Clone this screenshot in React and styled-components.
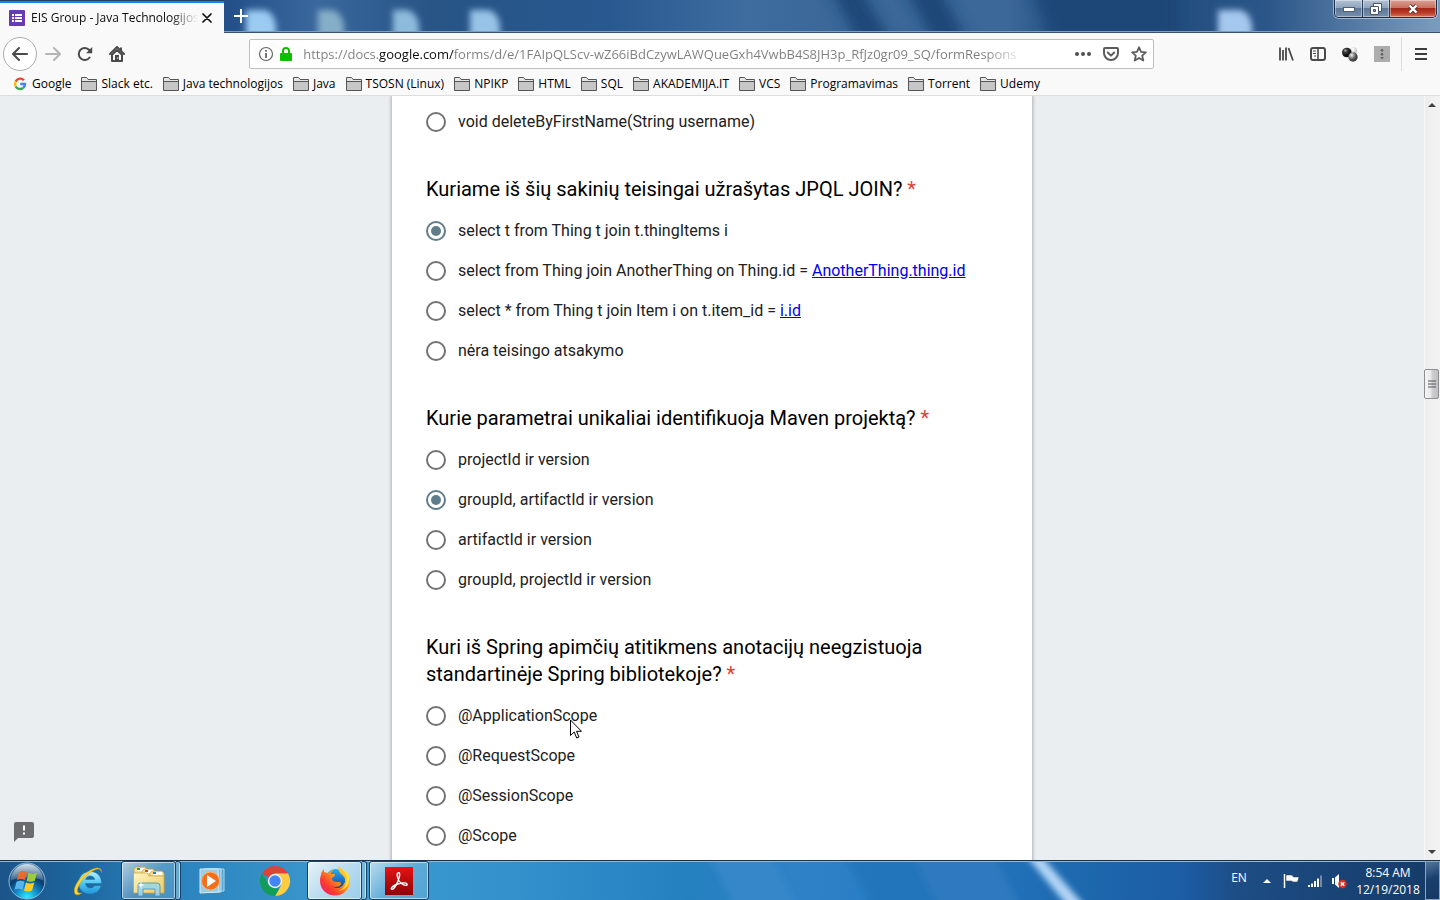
import React from "react";
import styled, { createGlobalStyle, css } from "styled-components";

const UI_FONT = '"Open Sans", "Noto Sans", sans-serif';
const FORM_FONT = 'Roboto, "Noto Sans", sans-serif';

const GlobalStyle = createGlobalStyle`
  *, *::before, *::after { box-sizing: border-box; }
  body { margin: 0; overflow: hidden; font-family: ${UI_FONT}; }
  button { padding: 0; border: 0; background: none; font: inherit; color: inherit; }
  svg { display: block; flex: none; }
`;

const Desktop = styled.div`
  position: relative;
  display: flex;
  flex-direction: column;
  height: 100vh;
  overflow: hidden;
`;

/* ---------- title bar ---------- */

const TitleBar = styled.header`
  position: relative;
  display: flex;
  align-items: flex-start;
  height: 33px;
  flex: none;
  background: #245289;
  overflow: hidden;
`;

const Backdrop = styled.svg`
  position: absolute;
  inset: 0;
  width: 100%;
  height: 100%;
`;

const Tab = styled.div`
  position: relative;
  display: flex;
  align-items: center;
  width: 224px;
  height: 33px;
  padding: 2px 8px 0 9px;
  background: #f9f9fa;
  border-top: 1px solid #24405f;
  box-shadow: inset 0 2px 0 #0a84ff;
`;

const TabTitle = styled.span`
  flex: 1;
  margin-left: 6px;
  overflow: hidden;
  white-space: nowrap;
  font-size: 12px;
  line-height: 18px;
  color: #0c0c0d;
  mask-image: linear-gradient(to right, #000 84%, transparent 100%);
`;

const TabButton = styled.button`
  position: relative;
  display: grid;
  place-items: center;
  width: 18px;
  height: 18px;
`;

const NewTab = styled(TabButton)`
  width: 34px;
  height: 32px;
`;

const WindowControls = styled.div`
  position: relative;
  display: flex;
  height: 18px;
  margin: 0 3px 0 auto;
  border: 1px solid #1d2d44;
  border-top: 0;
  border-radius: 0 0 5px 5px;
  box-shadow: 0 0 0 1px rgba(255, 255, 255, 0.45);
  overflow: hidden;
`;

const WindowButton = styled.button`
  display: grid;
  place-items: center;
  width: ${(p) => (p.$close ? 47 : 27)}px;
  height: 17px;
  box-shadow: inset 0 0 0 1px rgba(255, 255, 255, 0.4);
  background: ${(p) =>
    p.$close
      ? "linear-gradient(#d9a297 0, #c9705f 46%, #a5281a 50%, #b93a26 75%, #d8745a 100%)"
      : "linear-gradient(#b3c1d3 0, #8fa4bd 46%, #5d7898 50%, #7690ae 100%)"};
  & + & { border-left: 1px solid #2a3c55; }
`;

/* ---------- navigation ---------- */

const NavBar = styled.nav`
  display: flex;
  align-items: center;
  height: 41px;
  flex: none;
  padding: 0 3px;
  background: #f9f9fa;
`;

const ToolButton = styled.button`
  display: grid;
  place-items: center;
  width: 32px;
  height: 32px;
`;

const BackButton = styled(ToolButton)`
  width: 34px;
  height: 34px;
  border: 1px solid #adadae;
  border-radius: 50%;
  background: #fff;
`;

const NavSpace = styled.div`
  flex: 117;
`;

const AddressBar = styled.div`
  display: flex;
  align-items: center;
  flex: 901;
  min-width: 0;
  height: 30px;
  padding-left: 8px;
  background: #fff;
  border: 1px solid #bfbfc0;
  border-radius: 2px;
`;

const AddressIcons = styled.div`
  display: flex;
  gap: 4px;
  margin-right: 9px;
`;

const AddressInput = styled.input`
  flex: 1;
  min-width: 0;
  height: 26px;
  margin-right: 32px;
  padding: 0;
  border: 0;
  outline: 0;
  font: 13px ${UI_FONT};
  color: #737373;
  background: linear-gradient(
    to right,
    #7d7d7d 76px, #0c0c0d 76px, #0c0c0d 151px, #7d7d7d 151px,
    #7d7d7d calc(100% - 52px), transparent calc(100% - 12px)
  );
  background-clip: text;
  -webkit-text-fill-color: transparent;
`;

const PageAction = styled.button`
  display: grid;
  place-items: center;
  width: 28px;
  height: 28px;
`;

const Divider = styled.span`
  width: 1px;
  height: 34px;
  margin: 0 3px;
  background: #dcdcdd;
`;

const BookmarkBar = styled.div`
  display: flex;
  align-items: center;
  gap: 10px;
  height: 22px;
  flex: none;
  padding: 0 12px 2px;
  background: #f9f9fa;
  border-bottom: 1px solid #dededf;
`;

const Bookmark = styled.button`
  display: flex;
  align-items: center;
  gap: 4px;
  white-space: nowrap;
  font-size: 12px;
  line-height: 18px;
  color: #000;
`;

/* ---------- page ---------- */

const Viewport = styled.div`
  position: relative;
  display: flex;
  flex: 1;
  min-height: 0;
  background: #eaeef1;
`;

const PageArea = styled.main`
  flex: 1;
  overflow: hidden;
`;

const FormCard = styled.form`
  width: 640px;
  min-height: 100%;
  margin: 0 auto;
  padding: 6px 34px;
  background: #fff;
  box-shadow: 0 0 3px 1px rgba(0, 0, 0, 0.25);
  font-family: ${FORM_FONT};
`;

const Question = styled.fieldset`
  margin: 0 0 34px;
  padding: 0;
  border: 0;
  min-width: 0;
`;

const QuestionTitle = styled.legend`
  padding: 0 0 8px;
  font-size: 20px;
  line-height: 27px;
  color: #000;
`;

const Required = styled.span`
  color: #db4437;
`;

const Option = styled.label`
  display: flex;
  align-items: center;
  gap: 12px;
  height: 40px;
  font-size: 16px;
  line-height: 24px;
  color: #212121;
`;

const Radio = styled.input`
  appearance: none;
  display: grid;
  place-items: center;
  flex: none;
  width: 20px;
  height: 20px;
  margin: 0;
  border: 2px solid #737373;
  border-radius: 50%;
  &:checked { border-color: #607d8b; }
  &:checked::before {
    content: "";
    width: 10px;
    height: 10px;
    border-radius: 50%;
    background: #607d8b;
  }
`;

const OptionLink = styled.a`
  color: #0000ee;
  text-decoration: underline;
`;

const ReportButton = styled.button`
  position: absolute;
  left: 14px;
  bottom: 18px;
`;

const ScrollBar = styled.div`
  display: flex;
  flex-direction: column;
  width: 16px;
  background: linear-gradient(to right, #fafafa, #ebebec 2px, #f0f0f0 6px, #f2f2f2);
`;

const ScrollArrow = styled.button`
  display: grid;
  place-items: center;
  height: 17px;
`;

const ScrollTrack = styled.div`
  display: flex;
  flex-direction: column;
  flex: 1;
`;

const TrackPart = styled.div`
  flex: ${(p) => p.$part};
`;

const ScrollThumb = styled.div`
  display: grid;
  place-items: center;
  height: 30px;
  margin-right: 1px;
  border: 1px solid #8f8f8f;
  border-radius: 2px;
  background: linear-gradient(to right, #f5f5f5, #e9e9eb 45%, #cfcfd2 55%, #c0c0c4);
`;

const Pointer = styled.svg`
  position: absolute;
  left: 570px;
  top: 719px;
`;

/* ---------- taskbar ---------- */

const TaskBar = styled.footer`
  position: relative;
  display: flex;
  flex: none;
  height: 40px;
  border-top: 1px solid #1b3148;
  background: #2577bd;
  overflow: hidden;
`;

const StartButton = styled.button`
  position: relative;
  display: grid;
  place-items: center;
  width: 54px;
  height: 39px;
`;

const TaskList = styled.div`
  position: relative;
  display: flex;
  gap: 2px;
  margin-left: 5px;
`;

const running = css`
  border: 1px solid #14426b;
  border-radius: 3px;
  box-shadow: inset 0 0 0 1px rgba(255, 255, 255, 0.55);
  background: ${(p) =>
    p.$state === "active"
      ? "linear-gradient(135deg, #e8f3fa, #b9dcf0 50%, #9dcdea)"
      : "linear-gradient(135deg, rgba(255,255,255,.65), rgba(255,255,255,.2) 50%, rgba(255,255,255,.12))"};
`;

const TaskButton = styled.button`
  display: grid;
  place-items: center;
  width: ${(p) => (p.$stacked ? 55 : 60)}px;
  height: 39px;
  ${(p) => p.$state && running}
`;

const TaskGroup = styled.div`
  display: flex;
  width: 60px;
`;

const StackEdge = styled.span`
  width: 5px;
  height: 39px;
  border: 1px solid #14426b;
  border-left: 0;
  border-radius: 0 3px 3px 0;
  box-shadow: inset -1px 0 0 rgba(255, 255, 255, 0.6);
  background: rgba(255, 255, 255, 0.3);
`;

const Tray = styled.div`
  position: relative;
  display: flex;
  align-items: center;
  margin-left: auto;
  color: #fff;
  font-size: 12px;
`;

const Language = styled.button`
  width: 28px;
  margin: 0 2px 6px 0;
  font-size: 12px;
  line-height: 16px;
`;

const TrayButton = styled.button`
  display: grid;
  place-items: center;
  width: 24px;
  height: 38px;
`;

const Clock = styled.button`
  display: flex;
  flex-direction: column;
  align-items: center;
  width: 74px;
  font-size: 12px;
  line-height: 17px;
  white-space: nowrap;
`;

const ShowDesktop = styled.button`
  width: 15px;
  height: 39px;
  border: 1px solid #8ba5c0;
  background: linear-gradient(160deg, #54779d, #1a3f6d 45%, #163963);
`;

/* ---------- icons ---------- */

const FormsIcon = () => (
  <svg width="16" height="16" viewBox="0 0 16 16">
    <rect width="16" height="16" rx="1" fill="#673ab7" />
    <path d="M3 4h2v2H3zM6 4h7v2H6zM3 7h2v2H3zM6 7h7v2H6zM3 10h2v2H3zM6 10h7v2H6z" fill="#fff" />
  </svg>
);

const CloseIcon = () => (
  <svg width="10" height="10" viewBox="0 0 10 10">
    <path d="M1 1l8 8M9 1l-8 8" stroke="#0c0c0d" strokeWidth="1.700" strokeLinecap="round" />
  </svg>
);

const PlusIcon = () => (
  <svg width="14" height="14" viewBox="0 0 14 14">
    <path d="M7 0v14M0 7h14" stroke="#fff" strokeWidth="2" />
  </svg>
);

const ArrowIcon = ({ flip, color = "#4a4a4b" }) => (
  <svg width="16" height="16" viewBox="0 0 16 16">
    <path
      d={flip ? "M1 8h13M9 2l6 6-6 6" : "M15 8H2M7 2L1 8l6 6"}
      fill="none" stroke={color} strokeWidth="2" strokeLinecap="round" strokeLinejoin="round"
    />
  </svg>
);

const ReloadIcon = () => (
  <svg width="16" height="16" viewBox="0 0 16 16">
    <path d="M12.600 11.500A6 6 0 1 1 12.300 4" fill="none" stroke="#4a4a4b" strokeWidth="2" strokeLinecap="round" />
    <path d="M15.200 1v6.200H9z" fill="#4a4a4b" />
  </svg>
);

const HomeIcon = () => (
  <svg width="16" height="16" viewBox="0 0 16 16">
    <path d="M1 8l7-7 7 7" fill="none" stroke="#4a4a4b" strokeWidth="2" strokeLinecap="round" strokeLinejoin="round" />
    <path d="M3 8.800L8 4l5 4.800V15H3z" fill="none" stroke="#4a4a4b" strokeWidth="2" strokeLinejoin="round" />
    <path d="M6 9h4v6H6zM11 1.500h2V5h-2z" fill="#4a4a4b" />
    <circle cx="8.800" cy="12" r=".7" fill="#f9f9fa" />
  </svg>
);

const InfoIcon = () => (
  <svg width="16" height="16" viewBox="0 0 16 16">
    <circle cx="8" cy="8" r="6.500" fill="none" stroke="#666" strokeWidth="1.200" />
    <path d="M7.200 4h1.600v1.700H7.200zM7.200 7h1.600v5H7.200z" fill="#555" />
  </svg>
);

const LockIcon = () => (
  <svg width="16" height="16" viewBox="0 0 16 16">
    <path d="M5 7V5a3 3 0 0 1 6 0v2" fill="none" stroke="#12bc00" strokeWidth="2" />
    <rect x="2" y="7" width="12" height="8" rx="1" fill="#12bc00" />
  </svg>
);

const DotsIcon = () => (
  <svg width="16" height="16" viewBox="0 0 16 16" fill="#4f4f50">
    <circle cx="2" cy="8" r="2" /><circle cx="8" cy="8" r="2" /><circle cx="14" cy="8" r="2" />
  </svg>
);

const PocketIcon = () => (
  <svg width="16" height="16" viewBox="0 0 16 16" fill="none" stroke="#5c5c5d" strokeWidth="2" strokeLinecap="round" strokeLinejoin="round">
    <path d="M2 2h12a1 1 0 0 1 1 1v4a7 7 0 0 1-14 0V3a1 1 0 0 1 1-1z" />
    <path d="M4.800 6.500L8 9.600l3.200-3.100" />
  </svg>
);

const StarIcon = () => (
  <svg width="16" height="16" viewBox="0 0 16 16">
    <path d="M8 1.300l2 4.500 4.900.5-3.700 3.300 1.100 4.900L8 12l-4.300 2.500 1.100-4.900L1.100 6.300 6 5.800z" fill="none" stroke="#5c5c5d" strokeWidth="1.800" strokeLinejoin="round" />
  </svg>
);

const LibraryIcon = () => (
  <svg width="16" height="16" viewBox="0 0 16 16">
    <path d="M2 1.500v13M5 4v10.500M8 1.500v13M10.500 2l4.500 12.500" fill="none" stroke="#4a4a4b" strokeWidth="1.800" />
  </svg>
);

const SidebarIcon = () => (
  <svg width="16" height="16" viewBox="0 0 16 16" fill="none" stroke="#4a4a4b">
    <rect x="1" y="2" width="14" height="12" rx="2" strokeWidth="2" />
    <path d="M8 2v12" strokeWidth="1.600" />
    <path d="M3 5h3M3 7.500h3M4 10h2" />
  </svg>
);

const SpheresIcon = () => (
  <svg width="16" height="16" viewBox="0 0 16 16">
    <defs>
      <radialGradient id="dark" cx=".35" cy=".3"><stop stopColor="#bbb" /><stop offset=".35" stopColor="#444" /><stop offset="1" stopColor="#111" /></radialGradient>
      <radialGradient id="mid" cx=".35" cy=".3"><stop stopColor="#eee" /><stop offset="1" stopColor="#444" /></radialGradient>
      <radialGradient id="pale" cx=".4" cy=".3"><stop stopColor="#fff" /><stop offset="1" stopColor="#ccc" /></radialGradient>
    </defs>
    <circle cx="11.500" cy="5" r="3.800" fill="url(#pale)" />
    <circle cx="4.800" cy="6.500" r="4.800" fill="url(#dark)" />
    <circle cx="11" cy="11" r="4.700" fill="url(#mid)" />
  </svg>
);

const DownloaderIcon = () => (
  <svg width="16" height="16" viewBox="0 0 16 16">
    <rect width="16" height="16" fill="#adadad" />
    <path d="M7 3h2v1h1L8 6 6 4h1zM7 7h2v1h1l-2 2-2-2h1zM6 11h4l-2 2.500z" fill="#666" />
  </svg>
);

const MenuIcon = () => (
  <svg width="12" height="12" viewBox="0 0 12 12">
    <path d="M0 1h12M0 6h12M0 11h12" stroke="#3c3c3d" strokeWidth="2" />
  </svg>
);

const GoogleIcon = () => (
  <svg width="16" height="16" viewBox="0 0 16 16" fill="none" strokeWidth="2.400">
    <path d="M11.900 4.200A5 5 0 0 0 3.700 5.500" stroke="#ea4335" />
    <path d="M3.700 5.500a5 5 0 0 0 0 5" stroke="#fbbc05" />
    <path d="M3.700 10.500A5 5 0 0 0 11 12" stroke="#34a853" />
    <path d="M11 12a4.600 4.600 0 0 0 2-4H8.200" stroke="#4285f4" />
  </svg>
);

const FolderIcon = () => (
  <svg width="16" height="16" viewBox="0 0 16 16">
    <path d="M.5 14.500v-13h5l1.500 2h8.500v11z" fill="#c6c6c6" stroke="#555" strokeLinejoin="round" />
    <path d="M1 2h4.300l1.500 2H15v1H1z" fill="#e6e6e6" />
    <path d="M1 5.500h14" stroke="#555" />
  </svg>
);

const ReportIcon = () => (
  <svg width="20" height="20" viewBox="0 0 20 20">
    <path d="M2 0h16a2 2 0 0 1 2 2v12a2 2 0 0 1-2 2H4l-4 4V2a2 2 0 0 1 2-2z" fill="#6b6c6d" />
    <path d="M9 3.500h2v5H9zM9 10.500h2v2H9z" fill="#fff" />
  </svg>
);

const StartIcon = () => (
  <svg width="38" height="38" viewBox="0 0 38 38">
    <defs>
      <radialGradient id="orb" cx=".5" cy=".95" r=".9"><stop stopColor="#35e8ff" /><stop offset=".35" stopColor="#108ac8" /><stop offset=".65" stopColor="#0b3b6d" /><stop offset="1" stopColor="#5d86a8" /></radialGradient>
      <linearGradient id="orbShine" x2="0" y2="1"><stop stopColor="#e4eef5" stopOpacity=".85" /><stop offset="1" stopColor="#9ab5ca" stopOpacity=".3" /></linearGradient>
    </defs>
    <circle cx="19" cy="19" r="18" fill="url(#orb)" stroke="#8cb7d4" />
    <path d="M3 18a16 16 0 0 1 32 0q-16-5-32 0z" fill="url(#orbShine)" />
    <path d="M11 10q4-2 8 0l-2 8q-4-2-8 0z" fill="#ee6a2c" />
    <path d="M20.500 10.800q4 2 8.500 0l-2.200 8q-4 2-8.200 0z" fill="#9ccb3b" />
    <path d="M8.500 19.800q4-2 8 0l-2 8q-4-2-8 0z" fill="#56b5ec" />
    <path d="M18 20.500q4 2 8.300 0l-2.200 8q-4 2-8.100 0z" fill="#fdc92f" />
  </svg>
);

const ExplorerEIcon = () => (
  <svg width="32" height="32" viewBox="0 0 32 32">
    <defs><linearGradient id="ie" x2="0" y2="1"><stop stopColor="#b9f1ff" /><stop offset=".55" stopColor="#49c6f3" /><stop offset="1" stopColor="#2394d6" /></linearGradient></defs>
    <path d="M28.500 18.500H12.500c.3 3 2.300 4.500 4.800 4.500 2 0 3.300-.8 4.100-2.300h6.700C26.600 26 22.300 29 17 29 10.500 29 5.500 24.500 5.500 18S10.500 6.500 17.200 6.500c7 0 11.700 5 11.300 12zM12.700 14.500h9c-.4-2.200-2-3.500-4.400-3.500s-4.100 1.300-4.600 3.500z" fill="url(#ie)" stroke="#2078b4" strokeWidth=".6" />
    <path d="M28.500 7.500C29 3 25 1.500 19 4.500 10 8.500 0 20 1.500 27.500c.8 3.500 4.500 2.500 7.500.5-4 .8-5.300-1-4.300-4.500C6.500 17.500 14 8.500 21.500 5c4.500-2 6.500-.8 7 2.500z" fill="#fcd535" stroke="#c99b17" strokeWidth=".5" />
  </svg>
);

const FilesIcon = () => (
  <svg width="34" height="32" viewBox="0 0 34 32">
    <defs><linearGradient id="paper" x2="1" y2="1"><stop stopColor="#fff6c4" /><stop offset="1" stopColor="#edc75f" /></linearGradient></defs>
    <path d="M2 4l2-2h9l2 2v6H2z" fill="#f5dd8d" stroke="#c4a145" strokeWidth=".7" />
    <path d="M5 3h8v3H5z" fill="#fff" /><path d="M5 3h3v2H5z" fill="#17a639" />
    <path d="M10 6l2-2h9l2 2v6H10z" fill="#f5dd8d" stroke="#c4a145" strokeWidth=".7" />
    <path d="M13 5h8v3h-8z" fill="#fff" /><path d="M13 5h3v2h-3z" fill="#d2492a" />
    <path d="M18 8l2-2h10l2 2v20H18z" fill="#f5dd8d" stroke="#c4a145" strokeWidth=".7" />
    <path d="M21 7h9v3h-9z" fill="#fff" /><path d="M21 7h3v2h-3z" fill="#2480cc" />
    <path d="M1.500 8H15l2 3h15v17H1.500z" fill="url(#paper)" stroke="#c4a145" strokeWidth=".7" />
    <path d="M6 31V20q0-2 2-2h17q3 0 3 3v10h-5v-7H11v7z" fill="#9dd4ea" fillOpacity=".9" stroke="#4791ae" strokeWidth=".8" />
    <path d="M9 16l.7 3.300 3.300.7-3.300.7L9 24l-.7-3.300L5 20l3.300-.7z" fill="#fff" />
  </svg>
);

const MediaIcon = () => (
  <svg width="28" height="28" viewBox="0 0 28 28">
    <path d="M8 2h17v22H8z" fill="#5aa6d3" stroke="#a8d5ec" />
    <path d="M5 2h17v23H5z" fill="#7abadf" stroke="#c5e4f3" />
    <path d="M1 2h18l1 23-19 1z" fill="#9dcce5" stroke="#d5edf7" />
    <circle cx="11.500" cy="14" r="9" fill="#f26f1d" stroke="#ffb56a" />
    <path d="M8 8l9 6-9 6z" fill="#fff" />
  </svg>
);

const ChromeIcon = () => (
  <svg width="32" height="32" viewBox="0 0 32 32">
    <path d="M16 16L3 8.500A15 15 0 0 1 29 8.500H16z" fill="#db4437" />
    <path d="M29 8.500a15 15 0 0 1-13 22.500l6.500-11.300L16 8.500z" fill="#ffcd40" />
    <path d="M3 8.500l6.500 11.200L16 23.500h4.300L16 31A15 15 0 0 1 3 8.500z" fill="#0f9d58" />
    <circle cx="16" cy="16" r="7.200" fill="#f1f1f1" />
    <circle cx="16" cy="16" r="5.700" fill="#4285f4" />
  </svg>
);

const FirefoxIcon = () => (
  <svg width="32" height="32" viewBox="0 0 32 32">
    <defs>
      <linearGradient id="fox" x1="1" x2="0" y2="1"><stop stopColor="#fff14a" /><stop offset=".4" stopColor="#ffa21a" /><stop offset=".7" stopColor="#ff3b2f" /><stop offset="1" stopColor="#e3157a" /></linearGradient>
      <linearGradient id="globe" x2="0" y2="1"><stop stopColor="#17b0f5" /><stop offset="1" stopColor="#273a9d" /></linearGradient>
    </defs>
    <circle cx="16.500" cy="14" r="10" fill="url(#globe)" />
    <path d="M20 1c2 3 5 4 7 7l1-1c4 6 4 14-1 19-6 6-16 6-22 0-4-4-5-11-3-16 0-2 1-4 3-6v3l4 1c2-2 4-3 6-3-2 1-3 2-3 4h4c0 2-1 3-3 4 0 3 2 4 5 4 2 0 4 0 4 2-1 3-6 4-9 2 4 4 12 2 13-4 1-5-3-7-5-9-2-3-2-5-1-7z" fill="url(#fox)" />
    <path d="M20 1c2 3 6 5 7 9 2 7-1 14-8 16 8-1 12-7 11-15l-2-4-1 1c-2-3-5-4-7-7z" fill="#ffe53b" />
  </svg>
);

const AcrobatIcon = () => (
  <svg width="28" height="28" viewBox="0 0 28 28">
    <defs><linearGradient id="pdf" x2="0" y2="1"><stop stopColor="#e81215" /><stop offset="1" stopColor="#8a0506" /></linearGradient></defs>
    <rect width="28" height="28" fill="url(#pdf)" />
    <path d="M13 6c2-1 2 2 1 5-1 4-4 10-6 11-3 1-2-2 2-4 4-2 11-3 12-1 1 2-3 2-6-1-3-2-5-9-3-10z" fill="none" stroke="#fff" strokeWidth="1.400" />
  </svg>
);

const FlagIcon = () => (
  <svg width="16" height="16" viewBox="0 0 16 16">
    <path d="M1.500 1v14" stroke="#fff" strokeWidth="1.500" />
    <path d="M3 2h6l1.500 2H16l-1.500 5H10L8.500 8H3z" fill="#fff" stroke="#243b57" strokeWidth=".5" />
  </svg>
);

const SignalIcon = () => (
  <svg width="16" height="16" viewBox="0 0 16 16" fill="#fff">
    <path d="M1 12h2v2H1zM4 10.500h2V14H4zM7 8h2v6H7zM10 5.500h2V14h-2z" />
    <path d="M13 2.500h2V14h-2z" fill="#718aa5" />
  </svg>
);

const MutedIcon = () => (
  <svg width="16" height="16" viewBox="0 0 16 16">
    <path d="M1 5h2v6H1zM4 4.500L8 1v14l-4-3.500z" fill="#fff" />
    <circle cx="11.500" cy="11" r="4.200" fill="#dc2e24" />
    <path d="M9.800 9.300l3.400 3.400M13.200 9.300l-3.400 3.400" stroke="#fff" strokeWidth="1.500" />
  </svg>
);

const Triangle = ({ down, color }) => (
  <svg width="8" height="4" viewBox="0 0 8 4">
    <path d={down ? "M0 0h8L4 4z" : "M0 4h8L4 0z"} fill={color} />
  </svg>
);

/* ---------- data ---------- */

const folders = [
  "Slack etc.", "Java technologijos", "Java", "TSOSN (Linux)", "NPIKP", "HTML", "SQL",
  "AKADEMIJA.IT", "VCS", "Programavimas", "Torrent", "Udemy",
];

const questions = [
  { id: "delete", options: [{ text: "void deleteByFirstName(String username)" }] },
  {
    id: "jpql",
    title: "Kuriame iš šių sakinių teisingai užrašytas JPQL JOIN?",
    options: [
      { text: "select t from Thing t join t.thingItems i", checked: true },
      { text: "select from Thing join AnotherThing on Thing.id = ", link: "AnotherThing.thing.id" },
      { text: "select * from Thing t join Item i on t.item_id = ", link: "i.id" },
      { text: "nėra teisingo atsakymo" },
    ],
  },
  {
    id: "maven",
    title: "Kurie parametrai unikaliai identifikuoja Maven projektą?",
    options: [
      { text: "projectId ir version" },
      { text: "groupId, artifactId ir version", checked: true },
      { text: "artifactId ir version" },
      { text: "groupId, projectId ir version" },
    ],
  },
  {
    id: "scope",
    title: "Kuri iš Spring apimčių atitikmens anotacijų neegzistuoja standartinėje Spring bibliotekoje?",
    options: [
      { text: "@ApplicationScope" },
      { text: "@RequestScope" },
      { text: "@SessionScope" },
      { text: "@Scope" },
    ],
  },
];

const blobs = [
  { x: 246, w: 30, c: "#9ccbf2" },
  { x: 318, w: 26, c: "#85aec8" },
  { x: 393, w: 26, c: "#8dbbdc" },
  { x: 470, w: 30, c: "#97c3e6" },
  { x: 1218, w: 34, c: "#a5c8ee" },
];

/* ---------- page parts ---------- */

const BrowserTitle = () => (
  <TitleBar>
    <Backdrop viewBox="0 0 1440 33" preserveAspectRatio="none" aria-hidden="true">
      <defs>
        <linearGradient id="sky">
          <stop offset="0" stopColor="#25558d" /><stop offset=".16" stopColor="#24508a" />
          <stop offset=".22" stopColor="#3a689d" /><stop offset=".3" stopColor="#285486" />
          <stop offset=".42" stopColor="#27588f" /><stop offset=".52" stopColor="#3f6da0" />
          <stop offset=".57" stopColor="#3b6799" /><stop offset=".7" stopColor="#3b6799" />
          <stop offset=".76" stopColor="#1d4677" />
          <stop offset=".88" stopColor="#2b5689" /><stop offset="1" stopColor="#7d9cbd" />
        </linearGradient>
        <filter id="soft" filterUnits="userSpaceOnUse" x="0" y="-60" width="1440" height="160"><feGaussianBlur stdDeviation="7" /></filter>
        <filter id="glass" filterUnits="userSpaceOnUse" x="0" y="-60" width="1440" height="160"><feGaussianBlur stdDeviation="3" /></filter>
      </defs>
      <rect width="1440" height="33" fill="url(#sky)" />
      <g filter="url(#soft)">
        <path d="M815 -40h30l65 115h-35z" fill="#1e4777" />
        <path d="M890 -40h35l60 115h-35z" fill="#1e4777" />
        <path d="M1020 -40h160v115h-115z" fill="#1d4677" />
      </g>
      <g filter="url(#glass)">
        {blobs.map((b) => (
          <path key={b.x} d={`M${b.x} 10h${b.w - 12}q10 2 12 16v24h-${b.w}z`} fill={b.c} />
        ))}
      </g>
      <rect y="31" width="1440" height="1" fill="#7f9fc0" />
      <rect y="32" width="1440" height="1" fill="#36536f" />
    </Backdrop>
    <Tab>
      <FormsIcon />
      <TabTitle>EIS Group - Java Technologijos</TabTitle>
      <TabButton aria-label="Close tab"><CloseIcon /></TabButton>
    </Tab>
    <NewTab aria-label="New tab"><PlusIcon /></NewTab>
    <WindowControls>
      <WindowButton aria-label="Minimize">
        <svg width="12" height="6" viewBox="0 0 12 6"><rect x=".5" y="1.500" width="11" height="4" fill="#fff" stroke="#535f70" /></svg>
      </WindowButton>
      <WindowButton aria-label="Restore">
        <svg width="12" height="12" viewBox="0 0 12 12">
          <path d="M3.500.5h8v8h-8z" fill="#fff" stroke="#4a5568" />
          <path d="M.5 3.500h8v8h-8z" fill="#fff" stroke="#4a5568" />
          <path d="M3.500 6.500h2v2h-2z" fill="#7890ac" stroke="#4a5568" />
        </svg>
      </WindowButton>
      <WindowButton $close aria-label="Close">
        <svg width="12" height="10" viewBox="0 0 12 10">
          <path d="M2.500 1.500l7 7M9.500 1.500l-7 7" stroke="#563636" strokeWidth="4" />
          <path d="M2.500 1.500l7 7M9.500 1.500l-7 7" stroke="#fff" strokeWidth="2.400" />
        </svg>
      </WindowButton>
    </WindowControls>
  </TitleBar>
);

const BrowserNav = () => (
  <NavBar>
    <BackButton aria-label="Back"><ArrowIcon /></BackButton>
    <ToolButton aria-label="Forward"><ArrowIcon flip color="#b5b5b6" /></ToolButton>
    <ToolButton aria-label="Reload"><ReloadIcon /></ToolButton>
    <ToolButton aria-label="Home"><HomeIcon /></ToolButton>
    <NavSpace />
    <AddressBar>
      <AddressIcons><InfoIcon /><LockIcon /></AddressIcons>
      <AddressInput
        aria-label="Address"
        defaultValue="https://docs.google.com/forms/d/e/1FAIpQLScv-wZ66iBdCzywLAWQueGxh4VwbB4S8JH3p_RfJz0gr09_SQ/formRespons"
      />
      <PageAction aria-label="Page actions"><DotsIcon /></PageAction>
      <PageAction aria-label="Save to Pocket"><PocketIcon /></PageAction>
      <PageAction aria-label="Bookmark this page"><StarIcon /></PageAction>
    </AddressBar>
    <NavSpace />
    <ToolButton aria-label="Library"><LibraryIcon /></ToolButton>
    <ToolButton aria-label="Sidebars"><SidebarIcon /></ToolButton>
    <ToolButton aria-label="Extension"><SpheresIcon /></ToolButton>
    <ToolButton aria-label="Downloader"><DownloaderIcon /></ToolButton>
    <Divider />
    <ToolButton aria-label="Menu"><MenuIcon /></ToolButton>
  </NavBar>
);

const FormQuestion = ({ question }) => (
  <Question>
    {question.title && (
      <QuestionTitle>{question.title} <Required>*</Required></QuestionTitle>
    )}
    {question.options.map((o) => (
      <Option key={o.text}>
        <Radio type="radio" name={question.id} defaultChecked={o.checked} />
        <span>
          {o.text}
          {o.link && <OptionLink href="#">{o.link}</OptionLink>}
        </span>
      </Option>
    ))}
  </Question>
);

const WindowsTaskBar = () => (
  <TaskBar>
    <Backdrop viewBox="0 0 1440 39" preserveAspectRatio="none" aria-hidden="true">
      <defs>
        <linearGradient id="bar">
          <stop offset="0" stopColor="#1b5589" /><stop offset=".05" stopColor="#1d649c" />
          <stop offset=".12" stopColor="#2b83bd" /><stop offset=".25" stopColor="#3d9bd0" />
          <stop offset=".36" stopColor="#3390cb" /><stop offset=".48" stopColor="#2580c0" />
          <stop offset=".55" stopColor="#2f82c6" /><stop offset=".66" stopColor="#2579c2" />
          <stop offset=".75" stopColor="#1d68ae" /><stop offset=".82" stopColor="#1c5da6" />
          <stop offset=".86" stopColor="#1d4d85" /><stop offset="1" stopColor="#153a67" />
        </linearGradient>
        <filter id="ray" filterUnits="userSpaceOnUse" x="0" y="-60" width="1440" height="160"><feGaussianBlur stdDeviation="3" /></filter>
      </defs>
      <rect width="1440" height="39" fill="url(#bar)" />
      <g filter="url(#ray)">
        <path d="M702 -20h62l40 80h-62z" fill="#3587ca" />
        <path d="M838 -20h72l40 80h-72z" fill="#1f6fb5" fillOpacity=".6" />
        <path d="M905 -20h82l40 80h-82z" fill="#2d79bf" />
        <path d="M1014 -20h14l70 80h-18z" fill="#b4d6f7" />
      </g>
      <rect width="1440" height="1" fill="#8fb9dc" />
    </Backdrop>
    <StartButton aria-label="Start"><StartIcon /></StartButton>
    <TaskList>
      <TaskButton aria-label="Internet Explorer"><ExplorerEIcon /></TaskButton>
      <TaskGroup>
        <TaskButton $stacked $state="open" aria-label="Files"><FilesIcon /></TaskButton>
        <StackEdge />
      </TaskGroup>
      <TaskButton aria-label="Media Player"><MediaIcon /></TaskButton>
      <TaskButton aria-label="Chrome"><ChromeIcon /></TaskButton>
      <TaskGroup>
        <TaskButton $stacked $state="active" aria-label="Firefox"><FirefoxIcon /></TaskButton>
        <StackEdge />
      </TaskGroup>
      <TaskButton $state="open" aria-label="Acrobat Reader"><AcrobatIcon /></TaskButton>
    </TaskList>
    <Tray>
      <Language>EN</Language>
      <TrayButton aria-label="Show hidden icons"><Triangle color="#fff" /></TrayButton>
      <TrayButton aria-label="Action Center"><FlagIcon /></TrayButton>
      <TrayButton aria-label="Network"><SignalIcon /></TrayButton>
      <TrayButton aria-label="Volume"><MutedIcon /></TrayButton>
      <Clock><span>8:54 AM</span><span>12/19/2018</span></Clock>
      <ShowDesktop aria-label="Show desktop" />
    </Tray>
  </TaskBar>
);

export default function App() {
  return (
    <Desktop>
      <GlobalStyle />
      <BrowserTitle />
      <BrowserNav />
      <BookmarkBar>
        <Bookmark><GoogleIcon />Google</Bookmark>
        {folders.map((name) => (
          <Bookmark key={name}><FolderIcon />{name}</Bookmark>
        ))}
      </BookmarkBar>
      <Viewport>
        <PageArea>
          <FormCard>
            {questions.map((q) => <FormQuestion key={q.id} question={q} />)}
          </FormCard>
        </PageArea>
        <ReportButton aria-label="Report a problem"><ReportIcon /></ReportButton>
        <ScrollBar>
          <ScrollArrow aria-label="Scroll up"><Triangle color="#404040" /></ScrollArrow>
          <ScrollTrack>
            <TrackPart $part={256} />
            <ScrollThumb>
              <svg width="8" height="8" viewBox="0 0 8 8"><path d="M0 1h8M0 4h8M0 7h8" stroke="#555" /></svg>
            </ScrollThumb>
            <TrackPart $part={444} />
          </ScrollTrack>
          <ScrollArrow aria-label="Scroll down"><Triangle down color="#404040" /></ScrollArrow>
        </ScrollBar>
      </Viewport>
      <WindowsTaskBar />
      <Pointer width="12" height="20" viewBox="0 0 12 20" aria-hidden="true">
        <path d="M.5 1v15.500l3.700-3.500 2.500 6 2.300-1-2.500-5.700h5z" fill="#fff" stroke="#000" strokeLinejoin="round" />
      </Pointer>
    </Desktop>
  );
}
